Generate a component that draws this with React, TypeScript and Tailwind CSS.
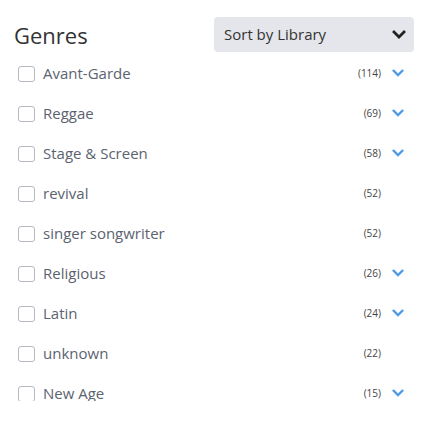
interface Genre {
  name: string
  count: number
  expandable: boolean
}

const GENRES: Genre[] = [
  { name: "Avant-Garde", count: 114, expandable: true },
  { name: "Reggae", count: 69, expandable: true },
  { name: "Stage & Screen", count: 58, expandable: true },
  { name: "revival", count: 52, expandable: false },
  { name: "singer songwriter", count: 52, expandable: false },
  { name: "Religious", count: 26, expandable: true },
  { name: "Latin", count: 24, expandable: true },
  { name: "unknown", count: 22, expandable: false },
  { name: "New Age", count: 15, expandable: true },
]

function Chevron({ className }: { className?: string }) {
  return (
    <svg className={className} viewBox="0 0 14 9" fill="none" stroke="currentColor">
      <path d="M2 2l5 5 5-5" strokeWidth={2.8} strokeLinecap="square" />
    </svg>
  )
}

export default function App() {
  return (
    <div className="w-[432px] h-[430px] bg-white font-['Open_Sans',sans-serif]">
      <div className="flex items-center justify-between pl-[14px] pr-[18px] pt-[17px]">
        <h2 className="text-[22px] leading-none text-[#333]">Genres</h2>
        <button className="flex h-[35px] w-[200px] items-center justify-between rounded-[4px] bg-[#e4e6ec] pl-[10px] pr-[8px] text-[15px] text-[#333]">
          Sort by Library
          <Chevron className="h-[9px] w-[14px] text-[#222]" />
        </button>
      </div>

      <ul className="mt-[2px] h-[347px] overflow-hidden pl-[18px] pr-[28px]">
        {GENRES.map((g) => (
          <li key={g.name} className="flex h-[40px] items-center">
            <span className="h-[16px] w-[17px] shrink-0 rounded-[3px] border border-[#b5b9c0]" />
            <span className="mb-[3px] ml-[8px] flex-1 text-[15px] leading-[20px] text-[#5b6370]">{g.name}</span>
            <span className="mb-[3px] text-[10px] leading-[14px] text-[#444]">({g.count})</span>
            <span className="mb-[2px] ml-[11px] flex w-[12px] justify-center">
              {g.expandable && <Chevron className="h-[8px] w-[12px] shrink-0 text-[#4f9be8]" />}
            </span>
          </li>
        ))}
      </ul>
    </div>
  )
}
